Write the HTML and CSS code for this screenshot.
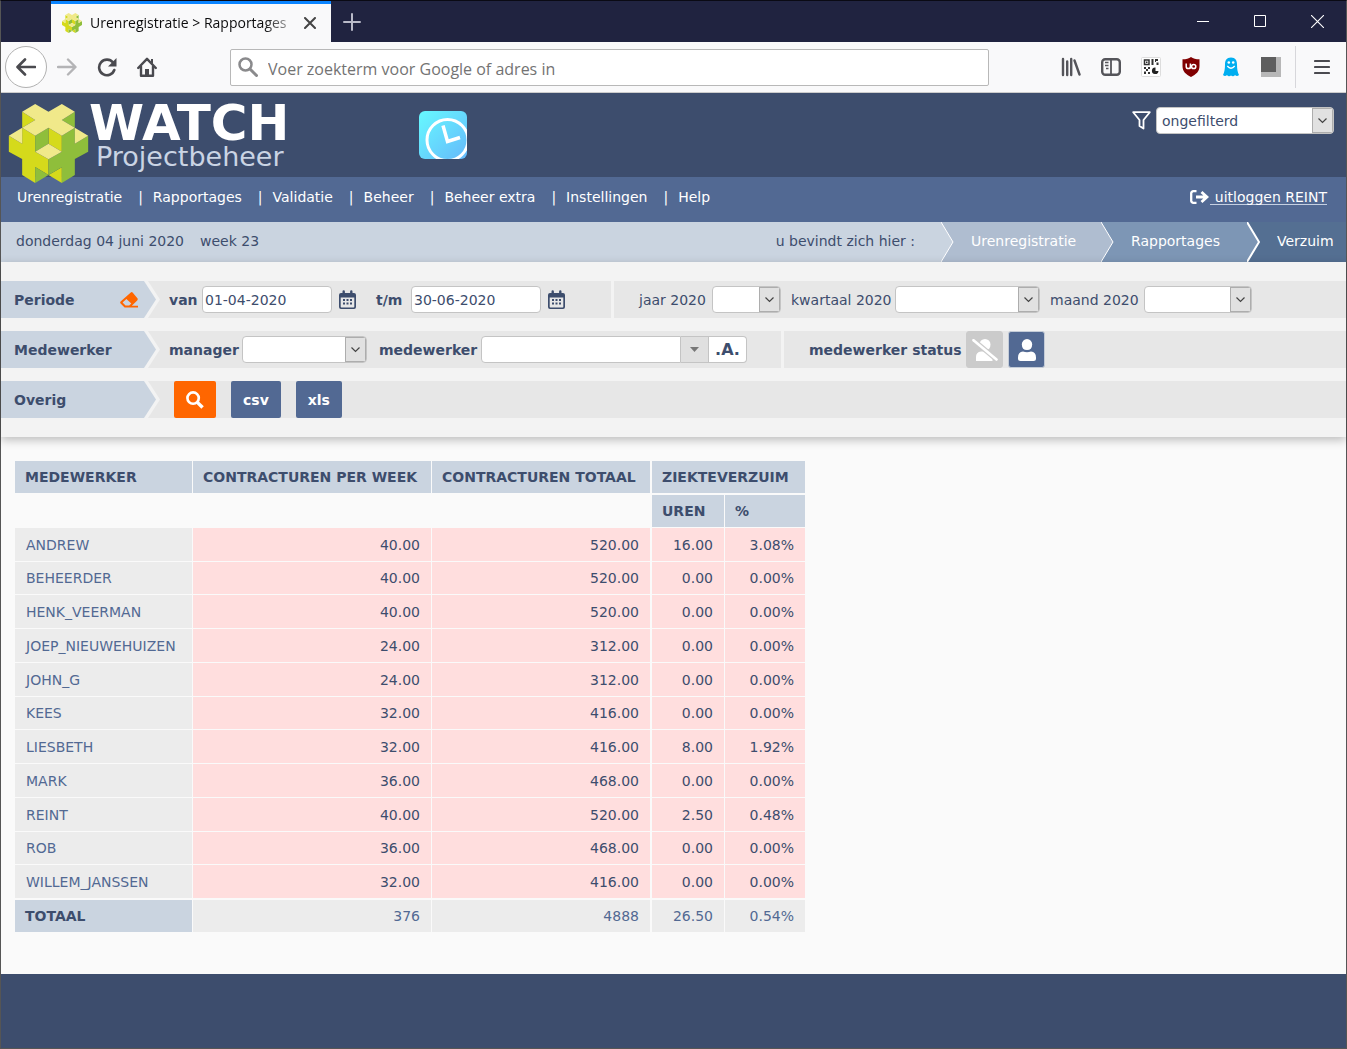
FILE: index.html
```html
<!DOCTYPE html>
<html lang="nl">
<head>
<meta charset="utf-8">
<meta name="viewport" content="width=device-width, initial-scale=1">
<title>Urenregistratie &gt; Rapportages</title>
<link rel="stylesheet" href="styles.css">
</head>
<body>
<svg class="defs" aria-hidden="true">
  <symbol id="cube" viewBox="12 17 238 237">
    <g fill="#d5da1b">
      <path d="M52 40 91 65 52 88z"/>
      <path d="M12 112 52 136V88L91 112V160L131 183V230L91 206V254L52 230V182L12 160z"/>
      <path d="M131 88 171 112V160L131 136zM171 207V254L131 230z"/>
    </g>
    <g fill="#8fbe3b">
      <path d="M210 40 171 65 210 88z"/>
      <path d="M91 112 131 88V136L91 160zM91 206 131 230 91 254z"/>
      <path d="M131 183 171 160V112L210 88V136L250 112V160L210 182V230L171 254V207L131 230z"/>
    </g>
    <g fill="#f0e98a">
      <path d="M52 40 91 17 131 40 171 17 210 40 171 65 210 88 171 112 131 88 91 112 52 88 91 65z"/>
      <path d="M12 112 52 88V136zM210 88 250 112 210 136zM91 160 131 136 171 160 131 183z"/>
    </g>
  </symbol>
  <symbol id="chevron" viewBox="0 0 9 6"><path d="M.5.5 4.5 4.500 8.500.5" fill="none" stroke="#444" stroke-width="1.200"/></symbol>
  <symbol id="calendar" viewBox="0 0 17 19">
    <path fill="#3d4d6d" fill-rule="evenodd" d="M2 3H3.500V1.500a1.200 1.200 0 0 1 2.400 0V3H11.100V1.500a1.200 1.200 0 0 1 2.400 0V3H15a2 2 0 0 1 2 2V17a2 2 0 0 1-2 2H2a2 2 0 0 1-2-2V5a2 2 0 0 1 2-2zM1.700 7.500V16.800a.7.7 0 0 0 .7.7H14.600a.7.7 0 0 0 .7-.7V7.500z"/>
    <path fill="#3d4d6d" d="M4 9h2v2H4zM7.500 9h2v2h-2zM11 9h2v2h-2zM4 12.500h2v2H4zM7.500 12.500h2v2h-2zM11 12.500h2v2h-2z"/>
  </symbol>
</svg>

<div class="window">
  <div class="titlebar">
    <div class="tab">
      <svg class="favicon" width="20" height="20"><use href="#cube"/></svg>
      <span class="tab-title">Urenregistratie &gt; Rapportages</span>
      <button class="plain" aria-label="Tabblad sluiten"><svg width="12" height="12" viewBox="0 0 12 12"><path d="M1 1 11 11M11 1 1 11" stroke="#444" stroke-width="2" stroke-linecap="round"/></svg></button>
    </div>
    <button class="plain new-tab" aria-label="Nieuw tabblad"><svg width="18" height="18" viewBox="0 0 18 18"><path d="M9 1V17M1 9H17" stroke="#b9bac8" stroke-width="2" stroke-linecap="round"/></svg></button>
    <div class="window-buttons">
      <button class="plain" aria-label="Minimaliseren"><svg width="13" height="13"><path d="M0 6.500H12" stroke="#fff"/></svg></button>
      <button class="plain" aria-label="Maximaliseren"><svg width="13" height="13"><path d="M.5.5H11.500V11.500H.5z" fill="none" stroke="#fff"/></svg></button>
      <button class="plain" aria-label="Sluiten"><svg width="13" height="13"><path d="M0 0 13 13M13 0 0 13" stroke="#fff" stroke-width="1.100"/></svg></button>
    </div>
  </div>

  <div class="toolbar">
    <button class="plain back" aria-label="Terug"><svg width="20" height="18" viewBox="0 0 20 18"><path d="M19 9H2M9 1.500 1.500 9 9 16.500" fill="none" stroke="#4a4a4f" stroke-width="2.600" stroke-linecap="round" stroke-linejoin="round"/></svg></button>
    <button class="plain" aria-label="Vooruit"><svg width="20" height="18" viewBox="0 0 20 18"><path d="M1 9H18M11 1.500 18.500 9 11 16.500" fill="none" stroke="#b4b4b6" stroke-width="2.400" stroke-linecap="round" stroke-linejoin="round"/></svg></button>
    <button class="plain" aria-label="Vernieuwen"><svg width="20" height="20" viewBox="0 0 20 20"><path d="M16 5.500A7.800 7.800 0 1 0 17.300 13" fill="none" stroke="#4a4a4f" stroke-width="2.600" stroke-linecap="round"/><path d="M19.500 1V9.500H11z" fill="#4a4a4f"/></svg></button>
    <button class="plain" aria-label="Startpagina"><svg width="20" height="20" viewBox="0 0 20 20"><path d="M1.200 11 10 1.800 18.800 11M4 9.500V18.700H16V9.500" fill="none" stroke="#4a4a4f" stroke-width="2.400" stroke-linecap="round" stroke-linejoin="round"/><path d="M8 12h4v7H8z" fill="#4a4a4f"/><path d="M14 2h2v5l-2-2z" fill="#4a4a4f"/></svg></button>
    <div class="address">
      <svg width="20" height="20" viewBox="0 0 20 20"><circle cx="7.500" cy="7.500" r="6" fill="none" stroke="#8a8a8c" stroke-width="2.500"/><path d="M12 12 18.500 18.500" stroke="#8a8a8c" stroke-width="3" stroke-linecap="round"/></svg>
      <input type="text" aria-label="Adres" placeholder="Voer zoekterm voor Google of adres in">
    </div>
    <div class="extensions">
      <button class="plain" aria-label="Bibliotheek"><svg width="20" height="20" viewBox="0 0 20 20"><path d="M2 2V18M6.200 4.500V18M10.200 2V18M13.500 3.500 18.500 17.500" stroke="#55555a" stroke-width="2.400" stroke-linecap="round"/></svg></button>
      <button class="plain" aria-label="Zijbalk"><svg width="20" height="18" viewBox="0 0 20 18"><rect x="1.200" y="1.200" width="17.600" height="15.600" rx="3" fill="none" stroke="#55555a" stroke-width="2.400"/><path d="M10 1V17" stroke="#55555a" stroke-width="1.800"/><path d="M4 4.500H7.500M4 7.500H7.500M5 10.500H7.500" stroke="#55555a" stroke-width="1.300"/></svg></button>
      <button class="plain" aria-label="QR-code"><svg width="20" height="20" viewBox="0 0 20 20"><rect x=".5" y=".5" width="19" height="19" rx="1" fill="#fff" stroke="#ddd"/><path d="M3.500 3H8V7.500H3.500z" fill="none" stroke="#333" stroke-width="1.500"/><path d="M5 4.500h1.500V6H5zM10.500 2h2v6h-2zM14 2h3v2h-2v1h-1zM15.500 5.500h2V8h-2zM3 10h2v2H3zM7 10h2v2H7zM5 12h2v2H5zM3 14.500h2V17H3zM7 15h2v2H7z" fill="#333"/><path d="M14.500 10.500V14H17.500A3.300 3.300 0 1 1 14.500 10.500z" fill="#222"/></svg></button>
      <button class="plain" aria-label="uBlock"><svg width="20" height="20" viewBox="0 0 20 20"><path d="M10 0C12 1.700 15 2.300 18.500 2.300V9C18.500 14.500 15 17.500 10 20 5 17.500 1.500 14.500 1.500 9V2.300C5 2.300 8 1.700 10 0z" fill="#800000"/><path d="M5.200 6.500V9.500A1.900 1.900 0 0 0 9.400 9.500V6.500M9.400 11.800V9" fill="none" stroke="#fff" stroke-width="1.500"/><circle cx="12.700" cy="9.500" r="2.100" fill="none" stroke="#fff" stroke-width="1.500"/></svg></button>
      <button class="plain" aria-label="Ghostery"><svg width="20" height="20" viewBox="0 0 20 20"><path d="M10 .5C14.500.5 16 3.500 16 7.500 16 12 16.500 15 18 18 16.500 19.500 15 19 14 18 13 19.500 11.500 19.800 10 18.500 8.500 19.800 7 19.500 6 18 5 19 3.500 19.500 2 18 3.500 15 4 12 4 7.500 4 3.500 5.500.5 10 .5z" fill="#00aef0"/><circle cx="7.800" cy="5.500" r="1.300" fill="#fff"/><circle cx="12.200" cy="5.500" r="1.300" fill="#fff"/><path d="M6.300 9Q10 13.500 13.700 9" fill="none" stroke="#fff" stroke-width="1.300"/></svg></button>
      <button class="plain" aria-label="Extensie"><svg width="20" height="20"><path d="M0 0H20V20H0z" fill="#b7b7b7"/><path d="M0 0H15V15H0z" fill="#5e5e5e"/></svg></button>
    </div>
    <button class="plain menu" aria-label="Menu"><svg width="16" height="16" viewBox="0 0 16 16"><path d="M1 2H15M1 8H15M1 14H15" stroke="#4a4a4f" stroke-width="2.200" stroke-linecap="round"/></svg></button>
  </div>

  <header class="brand">
    <a class="logo" href="#" aria-label="WATCH Projectbeheer">
      <svg width="81" height="79"><use href="#cube"/></svg>
      <span class="logo-text"><strong>WATCH</strong><span>Projectbeheer</span></span>
    </a>
    <svg class="clock" width="50" height="50" viewBox="0 0 50 50">
      <defs>
        <linearGradient id="sky" x1="0" y1="0" x2="1" y2="1"><stop offset="0" stop-color="#66fbff"/><stop offset="1" stop-color="#66b8fb"/></linearGradient>
        <clipPath id="tile"><rect x="1" y="1" width="48" height="48" rx="6"/></clipPath>
      </defs>
      <g clip-path="url(#tile)">
        <rect width="50" height="50" fill="url(#sky)"/>
        <circle cx="29.500" cy="30" r="20.500" fill="none" stroke="#fff" stroke-width="3"/>
        <path d="M25 15.500 29.500 31.500 42 27.500" fill="none" stroke="#fff" stroke-width="3.500"/>
      </g>
    </svg>
    <div class="filter">
      <svg width="19" height="19" viewBox="0 0 19 19"><path d="M1.200 1.200H17.800L11.500 9V17.500L7.500 15V9z" fill="none" stroke="#fff" stroke-width="1.800" stroke-linejoin="round"/></svg>
      <span class="select"><select aria-label="Filter"><option>ongefilterd</option></select><span class="arrow"><svg width="9" height="6"><use href="#chevron"/></svg></span></span>
    </div>
  </header>

  <nav class="menu-bar">
    <ul>
      <li><a href="#">Urenregistratie</a></li>
      <li><a href="#">Rapportages</a></li>
      <li><a href="#">Validatie</a></li>
      <li><a href="#">Beheer</a></li>
      <li><a href="#">Beheer extra</a></li>
      <li><a href="#">Instellingen</a></li>
      <li><a href="#">Help</a></li>
    </ul>
    <a class="logout" href="#"><svg width="19" height="14" viewBox="0 0 19 14"><path d="M6.500 1.200H3.500A2.200 2.200 0 0 0 1.200 3.500V10.500A2.200 2.200 0 0 0 3.500 12.800H6.500" fill="none" stroke="#fff" stroke-width="2.300"/><path d="M6 7H15M11.500 2 17 7 11.500 12" fill="none" stroke="#fff" stroke-width="2.800"/></svg><span>&nbsp;uitloggen REINT</span></a>
  </nav>

  <div class="location">
    <span class="date">donderdag 04 juni 2020</span>
    <span class="week">week 23</span>
    <span class="here">u bevindt zich hier :</span>
    <a class="crumb crumb-1" href="#"><svg width="13" height="40"><path class="before" d="M0 0 12 20 0 40z"/><path d="M0 0 12 20 0 40" class="edge"/></svg>Urenregistratie</a>
    <a class="crumb crumb-2" href="#"><svg width="13" height="40"><path class="before" d="M0 0 12 20 0 40z"/><path d="M0 0 12 20 0 40" class="edge"/></svg>Rapportages</a>
    <a class="crumb crumb-3" href="#"><svg width="13" height="40"><path class="before" d="M0 0 12 20 0 40z"/><path d="M0 0 12 20 0 40" class="edge"/></svg>Verzuim</a>
  </div>

  <form class="filters">
    <div class="row">
      <div class="tag"><div class="tag-face">Periode
        <button type="button" class="plain" aria-label="Periode wissen"><svg width="18" height="16" viewBox="0 0 18 16"><path fill="#ff6600" fill-rule="evenodd" d="M10.800.4.6 9.500Q-.3 10.500.6 11.600L4.600 15.600H18V13.700H11.800L17.200 8.400Q18.300 7.200 17.200 6.100L12.600.6Q11.700-.3 10.800.4zM6.400 7 11.300 11.500 9.200 13.600H5.500L2.600 10.600z"/></svg></button>
      </div></div>
      <div class="fields period">
        <label class="strong" for="van">van</label>
        <input id="van" type="text" value="01-04-2020">
        <button type="button" class="plain" aria-label="Kalender van"><svg width="17" height="19"><use href="#calendar"/></svg></button>
        <label class="strong" for="tm">t/m</label>
        <input id="tm" type="text" value="30-06-2020">
        <button type="button" class="plain" aria-label="Kalender t/m"><svg width="17" height="19"><use href="#calendar"/></svg></button>
      </div>
      <div class="fields spans">
        <label for="jaar">jaar 2020</label>
        <span class="select"><select id="jaar"><option></option></select><span class="arrow"><svg width="9" height="6"><use href="#chevron"/></svg></span></span>
        <label for="kwartaal">kwartaal 2020</label>
        <span class="select"><select id="kwartaal"><option></option></select><span class="arrow"><svg width="9" height="6"><use href="#chevron"/></svg></span></span>
        <label for="maand">maand 2020</label>
        <span class="select"><select id="maand"><option></option></select><span class="arrow"><svg width="9" height="6"><use href="#chevron"/></svg></span></span>
      </div>
    </div>

    <div class="row">
      <div class="tag"><div class="tag-face">Medewerker</div></div>
      <div class="fields staff">
        <label class="strong" for="manager">manager</label>
        <span class="select"><select id="manager"><option></option></select><span class="arrow"><svg width="9" height="6"><use href="#chevron"/></svg></span></span>
        <label class="strong" for="medewerker">medewerker</label>
        <span class="combo"><input id="medewerker" type="text"><button type="button" class="drop" aria-label="Openen"><svg width="9" height="5"><path d="M0 0H9L4.500 5z" fill="#777"/></svg></button><button type="button" class="all">.A.</button></span>
      </div>
      <div class="fields status">
        <span class="strong">medewerker status</span>
        <button type="button" class="toggle off" aria-label="Inactief"><svg width="26" height="22" viewBox="0 0 26 22"><path d="M13 0a5.500 5.500 0 0 1 5.500 5.500q0 5.500-5.500 5.500-5.500 0-5.500-5.500A5.500 5.500 0 0 1 13 0zM4 22V18q0-5 5-5.500h7q4 .5 4.500 5V22z" fill="#fff"/><path d="M-1-.9 27 22.600" stroke="#cbcbcb" stroke-width="5"/><path d="M1.500 1.200 24.500 20.500" stroke="#fff" stroke-width="2.600" stroke-linecap="round"/></svg></button>
        <button type="button" class="toggle" aria-label="Actief"><svg width="18" height="22" viewBox="0 0 18 22"><path d="M9 0a5.200 5.200 0 0 1 5.200 5.500Q14 11 9 11 4 11 3.800 5.500A5.200 5.200 0 0 1 9 0zM0 19.500V18.500Q0 13 5 12.500 9 14 13 12.500 18 13 18 18.500V19.500Q18 22 15.500 22H2.500Q0 22 0 19.500z" fill="#fff"/></svg></button>
      </div>
    </div>

    <div class="row">
      <div class="tag"><div class="tag-face">Overig</div></div>
      <div class="fields actions">
        <button type="submit" class="action search" aria-label="Zoeken"><svg width="18" height="18" viewBox="0 0 19 19"><circle cx="7.500" cy="7.500" r="6" fill="none" stroke="#fff" stroke-width="2.800"/><path d="M12 12 17.500 17.500" stroke="#fff" stroke-width="3.600"/></svg></button>
        <button type="button" class="action">csv</button>
        <button type="button" class="action">xls</button>
      </div>
    </div>
  </form>

  <main>
    <table>
      <colgroup><col class="c-name"><col class="c-week"><col class="c-total"><col class="c-hours"><col class="c-percent"></colgroup>
      <thead>
        <tr><th>MEDEWERKER</th><th>CONTRACTUREN PER WEEK</th><th>CONTRACTUREN TOTAAL</th><th colspan="2">ZIEKTEVERZUIM</th></tr>
        <tr><td colspan="3"></td><th>UREN</th><th>%</th></tr>
      </thead>
      <tbody>
        <tr><td><a href="#">ANDREW</a></td><td>40.00</td><td>520.00</td><td>16.00</td><td>3.08%</td></tr>
        <tr><td><a href="#">BEHEERDER</a></td><td>40.00</td><td>520.00</td><td>0.00</td><td>0.00%</td></tr>
        <tr><td><a href="#">HENK_VEERMAN</a></td><td>40.00</td><td>520.00</td><td>0.00</td><td>0.00%</td></tr>
        <tr><td><a href="#">JOEP_NIEUWEHUIZEN</a></td><td>24.00</td><td>312.00</td><td>0.00</td><td>0.00%</td></tr>
        <tr><td><a href="#">JOHN_G</a></td><td>24.00</td><td>312.00</td><td>0.00</td><td>0.00%</td></tr>
        <tr><td><a href="#">KEES</a></td><td>32.00</td><td>416.00</td><td>0.00</td><td>0.00%</td></tr>
        <tr><td><a href="#">LIESBETH</a></td><td>32.00</td><td>416.00</td><td>8.00</td><td>1.92%</td></tr>
        <tr><td><a href="#">MARK</a></td><td>36.00</td><td>468.00</td><td>0.00</td><td>0.00%</td></tr>
        <tr><td><a href="#">REINT</a></td><td>40.00</td><td>520.00</td><td>2.50</td><td>0.48%</td></tr>
        <tr><td><a href="#">ROB</a></td><td>36.00</td><td>468.00</td><td>0.00</td><td>0.00%</td></tr>
        <tr><td><a href="#">WILLEM_JANSSEN</a></td><td>32.00</td><td>416.00</td><td>0.00</td><td>0.00%</td></tr>
      </tbody>
      <tfoot>
        <tr><th>TOTAAL</th><td>376</td><td>4888</td><td>26.50</td><td>0.54%</td></tr>
      </tfoot>
    </table>
  </main>
  <footer></footer>
</div>
</body>
</html>
```

FILE: styles.css
```css
* { box-sizing: border-box; }

body {
  margin: 0;
  background: #fafafa;
  color: #3d4d6d;
  font: 14px/20px Verdana, "DejaVu Sans", sans-serif;
}

svg { display: block; flex: none; }
.defs { position: absolute; width: 0; height: 0; }
a { color: inherit; text-decoration: none; }
input, select, button { font: inherit; color: inherit; }

.plain {
  display: flex;
  align-items: center;
  justify-content: center;
  padding: 0;
  border: 0;
  background: none;
}

.strong { font-weight: bold; }

.window {
  display: flex;
  flex-direction: column;
  min-height: 100vh;
  border: 1px solid #555;
  border-top-color: #0a0a14;
}

/* Browser frame */
.titlebar {
  display: flex;
  height: 41px;
  padding-left: 50px;
  background: #202340;
  font-family: "Segoe UI", "Open Sans", sans-serif;
}

.tab {
  display: flex;
  align-items: center;
  gap: 8px;
  width: 280px;
  padding: 0 15px 0 11px;
  border-top: 3px solid #0a84ff;
  background: #f9f9fa;
  color: #0c0c0d;
  font-size: 14px;
}

.tab-title {
  flex: 1;
  white-space: nowrap;
  mask-image: linear-gradient(to right, #000 86%, rgba(0, 0, 0, .3));
}

.tab .plain { margin-left: 4px; }
.new-tab { margin-left: 12px; }

.window-buttons {
  display: flex;
  gap: 44px;
  margin-left: auto;
  padding-right: 22px;
}

.toolbar {
  display: flex;
  align-items: center;
  gap: 20px;
  height: 51px;
  padding-left: 4px;
  border-bottom: 1px solid #ccc;
  background: #f9f9fa;
  font-family: "Segoe UI", "Open Sans", sans-serif;
}

.back {
  width: 42px;
  height: 42px;
  margin-right: -10px;
  border: 1px solid #b1b1b1;
  border-radius: 50%;
  background: #fff;
}

.address {
  display: flex;
  align-items: center;
  gap: 10px;
  width: 759px;
  height: 37px;
  margin-left: 53px;
  padding-left: 7px;
  border: 1px solid #b8b8b8;
  border-radius: 2px;
  background: #fff;
}

.address input {
  flex: 1;
  min-width: 0;
  padding: 4px 0 0;
  border: 0;
  background: none;
  font-size: 16px;
}

.address input::placeholder { color: #737373; }

.extensions {
  display: flex;
  align-items: center;
  gap: 20px;
  margin-left: auto;
}

.menu {
  height: 42px;
  margin-left: -6px;
  padding: 0 16px 0 18px;
  border-left: 1px solid #d7d7db;
}

/* Application header */
.brand {
  display: flex;
  align-items: flex-start;
  height: 84px;
  background: #3d4d6d;
}

.logo {
  position: relative;
  display: flex;
  width: 417px;
  padding: 11px 0 0 7px;
  color: #fff;
}

.logo-text { display: flex; flex-direction: column; }
.logo-text strong { font-size: 50px; line-height: 38px; }

.logo-text span {
  padding-left: 7px;
  color: #cad4e4;
  font-size: 27px;
  line-height: 29px;
}

.clock { margin-top: 17px; }

.filter {
  display: flex;
  align-items: center;
  gap: 5px;
  margin: 14px 12px 0 auto;
}

.filter .select { width: 178px; }

.select {
  display: flex;
  height: 27px;
  border: 1px solid #c4c4c4;
  border-radius: 4px;
  background: #fff;
  overflow: hidden;
  position: relative;
}

.select select {
  flex: 1;
  min-width: 0;
  padding: 0 24px 0 5px;
  border: 0;
  background: none;
  appearance: none;
}

.arrow {
  position: absolute;
  inset: 0 0 0 auto;
  display: flex;
  align-items: center;
  justify-content: center;
  width: 21px;
  border: 1px solid #adadad;
  background: #e1e1e1;
  pointer-events: none;
}

.menu-bar {
  display: flex;
  justify-content: space-between;
  height: 45px;
  padding: 10px 19px 0 16px;
  background: #526993;
  color: #fff;
}

.menu-bar ul {
  display: flex;
  margin: 0;
  padding: 0;
  list-style: none;
}

.menu-bar li + li::before {
  content: "|";
  margin: 0 10px 0 16px;
}

.logout { display: flex; gap: 1px; }
.logout svg { margin-top: 3px; }
.logout span { border-bottom: 1px solid #c5d0e2; height: 18px; }

.location {
  display: flex;
  height: 40px;
  background: #cad4e0;
  line-height: 38px;
}

.date { padding-left: 15px; }
.week { padding-left: 16px; }
.here { margin-left: auto; padding-right: 26px; }

.crumb {
  display: flex;
  gap: 17px;
  color: #fff;
}

.crumb .edge { fill: none; stroke: #fff; stroke-width: 1; }
.crumb-1 { width: 160px; background: #afbdd0; }
.crumb-1 .before { fill: #cad4e0; }
.crumb-2 { width: 146px; background: #7d96b5; }
.crumb-2 .before { fill: #afbdd0; }
.crumb-3 { width: 99px; background: #546f92; }
.crumb-3 .before { fill: #7d96b5; }
.crumb-3 .edge { stroke-width: 2; }

/* Filter form */
.filters {
  display: flex;
  flex-direction: column;
  gap: 13px;
  padding: 19px 0;
  background: #f3f3f3;
  box-shadow: 0 3px 9px rgba(0, 0, 0, .25);
}

.row {
  display: flex;
  gap: 3px;
  height: 37px;
}

.tag {
  z-index: 1;
  width: 159px;
  margin-right: -18px;
  background: #f3f3f3;
  clip-path: polygon(0 0, 147px 0, 100% 50%, 147px 100%, 0 100%);
}

.tag-face {
  display: flex;
  align-items: center;
  justify-content: space-between;
  width: 155px;
  height: 37px;
  padding: 0 18px 0 13px;
  background: #cad4e0;
  font-weight: bold;
  clip-path: polygon(0 0, 143px 0, 100% 50%, 143px 100%, 0 100%);
}

.fields {
  display: grid;
  align-items: center;
  background: #e7e7e7;
  white-space: nowrap;
}

.fields input {
  height: 27px;
  padding: 0 2px;
  border: 1px solid #c4c4c4;
  border-radius: 4px;
  background: #fff;
}

.period {
  grid-template-columns: 33px 130px 44px 35px 130px 31px;
  width: 466px;
  padding-left: 24px;
}

.period .plain { justify-self: start; padding-left: 7px; }

.spans {
  flex: 1;
  grid-template-columns: 73px 69px 114px 145px 104px 108px;
  padding-left: 25px;
}

.spans label:not(:first-child) { padding-left: 10px; }

.staff {
  grid-template-columns: 73px 125px 114px 266px;
  width: 636px;
  padding-left: 24px;
}

.staff label:not(:first-child) { padding-left: 12px; }

.combo { display: flex; }
.combo input { width: 200px; border-radius: 4px 0 0 4px; }

.combo button {
  display: flex;
  align-items: center;
  justify-content: center;
  padding: 0;
  border: 1px solid #c4c4c4;
  border-left: 0;
}

.drop { width: 28px; background: #e0e0e0; }

.all {
  width: 38px;
  border-radius: 0 4px 4px 0;
  background: #fff;
  font-size: 16px;
  font-weight: bold;
}

.status {
  flex: 1;
  grid-template-columns: 157px 42px 38px;
  padding-left: 25px;
}

.toggle {
  display: flex;
  align-items: center;
  justify-content: center;
  width: 37px;
  height: 37px;
  padding: 0;
  border: 1px solid #c4ccd8;
  border-radius: 3px;
  background: #526993;
}

.toggle.off { border-color: #cbcbcb; background: #cbcbcb; }

.actions {
  display: flex;
  flex: 1;
  gap: 15px;
  padding-left: 29px;
}

.action {
  display: flex;
  align-items: center;
  height: 37px;
  padding: 0 12px;
  border: 0;
  border-radius: 2px;
  background: #526993;
  color: #fff;
  font-weight: bold;
}

.search { background: #ff6600; }

/* Report */
main { padding: 24px 14px 42px; }

table {
  width: 790px;
  table-layout: fixed;
  border-spacing: 0;
}

.c-name { width: 178px; }
.c-week { width: 239px; }
.c-total { width: 220px; }
.c-hours { width: 73px; }
.c-percent { width: 80px; }

th, td {
  height: 34px;
  padding: 0 11px;
  border: 0 solid #fafafa;
  border-width: 0 1px 1px 0;
  text-align: right;
}

th { padding: 0 10px; background: #cad4e0; text-align: left; }
tr > :last-child { border-right-width: 0; }
tr > :nth-child(3) { border-right-width: 2px; }
thead tr:first-child th { border-bottom-width: 2px; }
thead tr:last-child th { height: 33px; border-right-width: 1px; }
thead tr:last-child th:last-child { border-right-width: 0; }
thead td { height: 33px; }

tbody td { background: #ffdede; }
tbody td:first-child { background: #ececec; color: #526993; text-align: left; }
tbody tr:nth-child(4n+2) td { height: 33px; }
tbody tr:last-child td { height: 35px; border-bottom-width: 2px; }

tfoot th, tfoot td { height: 32px; border-bottom-width: 0; }
tfoot td { background: #ececec; color: #526993; }

footer { flex: 1; min-height: 60px; background: #3d4d6d; }
```
